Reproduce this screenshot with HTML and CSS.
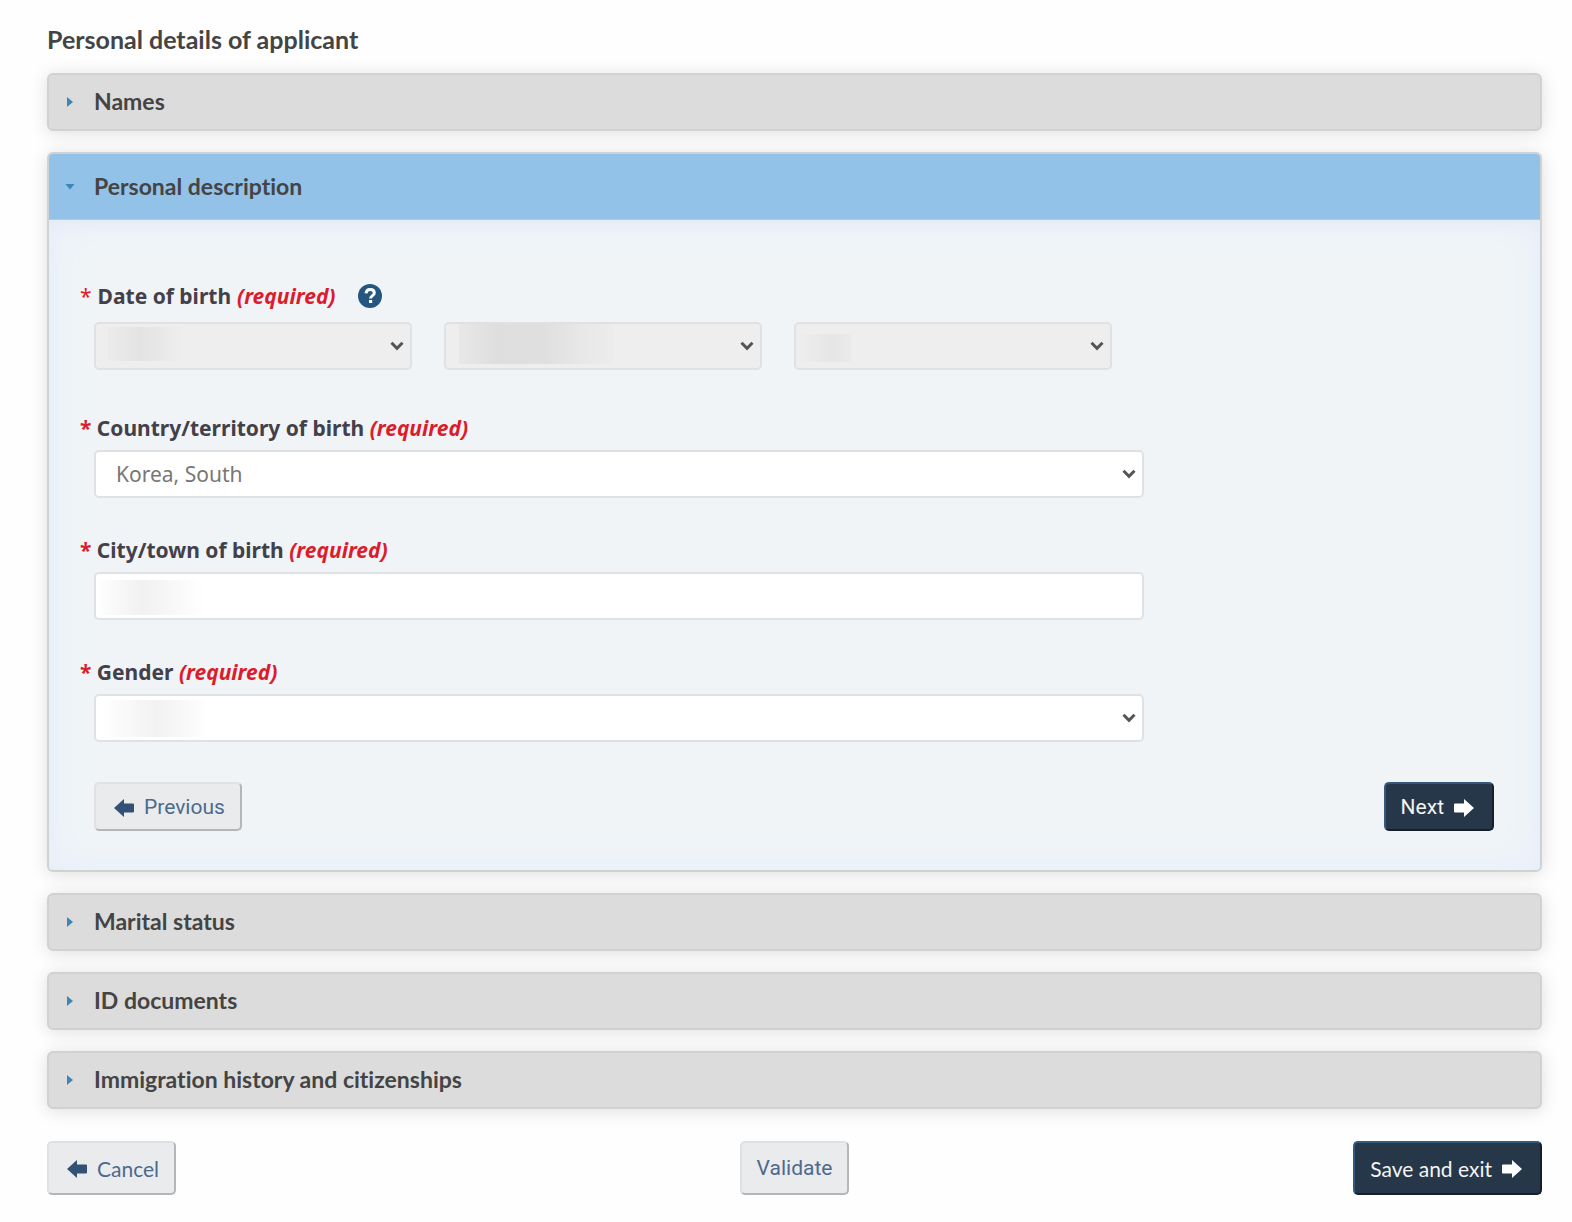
FILE: index.html
```html
<!DOCTYPE html>
<html lang="en">
<head>
  <meta charset="UTF-8">
  <title>Personal details of applicant</title>
  <meta name="viewport" content="width=device-width, initial-scale=1.0">
  <link rel="stylesheet" href="styles.css">
</head>
<body>

  <!-- Shared icons -->
  <svg class="sprite" aria-hidden="true">
    <symbol id="arrow-left" viewBox="0 0 20 18">
      <path d="M0 9 L10 0 V4.5 H19 Q20 4.5 20 5.5 V12.5 Q20 13.5 19 13.5 H10 V18 Z"/>
    </symbol>
    <symbol id="arrow-right" viewBox="0 0 20 18">
      <path d="M20 9 L10 0 V4.5 H1 Q0 4.5 0 5.5 V12.5 Q0 13.5 1 13.5 H10 V18 Z"/>
    </symbol>
    <symbol id="chevron" viewBox="0 0 14 10">
      <path d="M1.5 1.8 L7 7.3 L12.5 1.8" fill="none" stroke="currentColor" stroke-width="3"/>
    </symbol>
  </svg>

  <form class="page">
    <h1>Personal details of applicant</h1>

    <details class="panel">
      <summary>Names</summary>
    </details>

    <details class="panel" open>
      <summary>Personal description</summary>
      <div class="panel-body">

        <fieldset class="field field-date">
          <legend><span class="star">*</span> Date of birth <em>(required)</em>
            <button type="button" class="help" aria-label="Help">
              <svg viewBox="0 0 24 24">
                <circle cx="12" cy="12" r="12" fill="#25567f"/>
                <path d="M8 9.4 C8.3 6.8 9.9 5.6 12.2 5.6 C14.8 5.6 16.3 7 16.3 9 C16.3 11.7 12.6 11.6 12.6 14.4" fill="none" stroke="#fff" stroke-width="3"/>
                <rect x="11" y="16" width="3.2" height="3" fill="#fff"/>
              </svg>
            </button>
          </legend>
          <div class="date-row">
            <div class="select">
              <select class="masked-year" aria-label="Year" disabled><option></option></select>
              <svg><use href="#chevron"/></svg>
            </div>
            <div class="select">
              <select class="masked-month" aria-label="Month" disabled><option></option></select>
              <svg><use href="#chevron"/></svg>
            </div>
            <div class="select">
              <select class="masked-day" aria-label="Day" disabled><option></option></select>
              <svg><use href="#chevron"/></svg>
            </div>
          </div>
        </fieldset>

        <div class="field">
          <label for="country"><span class="star">*</span> Country/territory of birth <em>(required)</em></label>
          <div class="select">
            <select id="country"><option>Korea, South</option></select>
            <svg><use href="#chevron"/></svg>
          </div>
        </div>

        <div class="field">
          <label for="city"><span class="star">*</span> City/town of birth <em>(required)</em></label>
          <input type="text" id="city" class="masked-city">
        </div>

        <div class="field">
          <label for="gender"><span class="star">*</span> Gender <em>(required)</em></label>
          <div class="select">
            <select id="gender" class="masked-gender"><option></option></select>
            <svg><use href="#chevron"/></svg>
          </div>
        </div>

        <div class="panel-nav">
          <button type="button" class="btn"><svg><use href="#arrow-left"/></svg>Previous</button>
          <button type="button" class="btn btn-primary">Next<svg><use href="#arrow-right"/></svg></button>
        </div>
      </div>
    </details>

    <details class="panel">
      <summary>Marital status</summary>
    </details>

    <details class="panel">
      <summary>ID documents</summary>
    </details>

    <details class="panel">
      <summary>Immigration history and citizenships</summary>
    </details>

    <div class="form-nav">
      <button type="button" class="btn btn-lato"><svg><use href="#arrow-left"/></svg>Cancel</button>
      <button type="button" class="btn">Validate</button>
      <button type="submit" class="btn btn-primary btn-lato">Save and exit<svg><use href="#arrow-right"/></svg></button>
    </div>
  </form>

</body>
</html>
```
FILE: styles.css
```css
* {
  box-sizing: border-box;
}

body {
  margin: 0;
  background: #fefefe;
  color: #43404a;
  font-family: "Noto Sans", sans-serif;
  font-size: 21px;
}

.sprite {
  display: none;
}

.page {
  padding: 24px 30px 27px 47px;
}

h1 {
  margin: 0 0 19px;
  font-family: Lato, sans-serif;
  font-size: 25px;
  line-height: 30px;
  font-weight: bold;
  font-variant-ligatures: none;
  color: #444;
}

/* Panels */
.panel {
  margin-bottom: 21px;
  border: 2px solid #d0d1d2;
  border-radius: 6px;
  background: #dcdcdc;
  box-shadow: 0 2px 18px rgba(0, 0, 0, 0.13);
}

.panel summary {
  display: flex;
  align-items: center;
  height: 54px;
  padding: 0 0 2px 18px;
  font-family: Lato, sans-serif;
  font-size: 23px;
  font-weight: bold;
  font-variant-ligatures: none;
  color: #444;
  cursor: pointer;
}

.panel summary::before {
  content: "";
  width: 6px;
  height: 10px;
  margin-top: 2px;
  margin-right: 21px;
  background: #3f86b8;
  clip-path: polygon(0 0, 100% 50%, 0 100%);
}

.panel[open] {
  background: #f0f4f7;
}

.panel[open] summary {
  height: 66px;
  padding-left: 16px;
  background: #93c2e9;
  border-bottom: 1px solid #b9c8d4;
  border-radius: 4px 4px 0 0;
}

.panel[open] summary::before {
  width: 10px;
  height: 6px;
  margin-right: 19px;
  clip-path: polygon(0 0, 100% 0, 50% 100%);
}

.panel-body {
  padding: 62px 46px 39px 45px;
  border-radius: 0 0 4px 4px;
  box-shadow: inset 0 0 40px #e6effc, inset 0 6px 20px -8px rgba(0, 0, 0, 0.1);
}

/* Fields */
.field {
  margin: 0 0 38px;
  padding: 0;
  border: 0;
}

.field-date {
  margin-bottom: 44px;
}

/* the star hangs to the left of the control */
.field label,
.field legend {
  display: block;
  margin: 0 0 8px -14px;
  padding: 0;
  line-height: 28px;
  font-weight: bold;
}

.field legend {
  display: flex;
  align-items: center;
  gap: 6px;
  margin-bottom: 12px;
}

.field em,
.star {
  color: #dc1c2c;
}

.field-date .star {
  font-weight: normal;
}

.help {
  width: 24px;
  height: 24px;
  margin-left: 16px;
  padding: 0;
  border: 0;
  background: none;
  cursor: pointer;
}

.help svg {
  display: block;
  width: 24px;
  height: 24px;
}

.select {
  position: relative;
  width: 75%;
}

.select svg {
  position: absolute;
  right: 8px;
  top: 19px;
  width: 14px;
  height: 10px;
  color: #555;
  pointer-events: none;
}

.field select,
.field input {
  display: block;
  width: 100%;
  height: 48px;
  padding: 0 20px;
  border: 2px solid #dfe1e2;
  border-radius: 5px;
  appearance: none;
  background-color: #fff;
  background-repeat: no-repeat;
  color: #777;
  font-family: inherit;
  font-size: 21px;
}

.field input {
  width: 75%;
}

.date-row {
  display: flex;
  gap: 32px;
}

.date-row .select {
  width: calc(25% - 32px);
}

.field select:disabled {
  background-color: #eee;
  opacity: 1;
}

/* Masked values */
.field .masked-year {
  background-image: linear-gradient(90deg, #ebebeb, #e3e3e3 45%, #eee);
  background-position: 12px 3px;
  background-size: 74px 34px;
}

.field .masked-month {
  background-image: linear-gradient(90deg, #e8e8e8, #dedede 25%, #dfdfdf 55%, #e8e8e8 80%, #ececec);
  background-position: 13px 0;
  background-size: 154px 40px;
}

.field .masked-day {
  background-image: linear-gradient(90deg, #ededed, #e6e6e6 60%, #eaeaea);
  background-position: 5px 10px;
  background-size: 50px 28px;
}

.field .masked-city {
  background-image: linear-gradient(90deg, #fdfdfd, #f1f1f1 40%, #fff);
  background-position: 4px 6px;
  background-size: 104px 35px;
}

.field .masked-gender {
  background-image: linear-gradient(90deg, #fff, #f2f2f2 55%, #fdfdfd);
  background-position: 4px 4px;
  background-size: 104px 37px;
}

/* Buttons */
.btn {
  display: inline-flex;
  align-items: center;
  gap: 7px;
  height: 49px;
  padding: 0 15px;
  border: 2px solid;
  border-color: #dfe1e3 #b4b6b9 #b4b6b9 #dfe1e3;
  border-radius: 5px;
  background: #eaebed;
  color: #4b6a8e;
  font-family: Roboto, sans-serif;
  font-size: 21px;
  cursor: pointer;
}

.btn svg {
  width: 20px;
  height: 18px;
  margin: 2px 3px 0;
  fill: #335075;
}

.btn-primary {
  border-color: #35597a #161f2a #161f2a #35597a;
  background: #26374a;
  color: #f4f4f4;
}

.btn-primary svg {
  fill: #fff;
}

.btn-lato {
  font-family: Lato, sans-serif;
}

.panel-nav {
  display: flex;
  justify-content: space-between;
  margin-top: 40px;
}

.form-nav {
  display: grid;
  grid-template-columns: 1fr auto 1fr;
  margin-top: 32px;
}

.form-nav .btn {
  height: 54px;
  justify-self: start;
}

.form-nav .btn:last-child {
  justify-self: end;
}
```
